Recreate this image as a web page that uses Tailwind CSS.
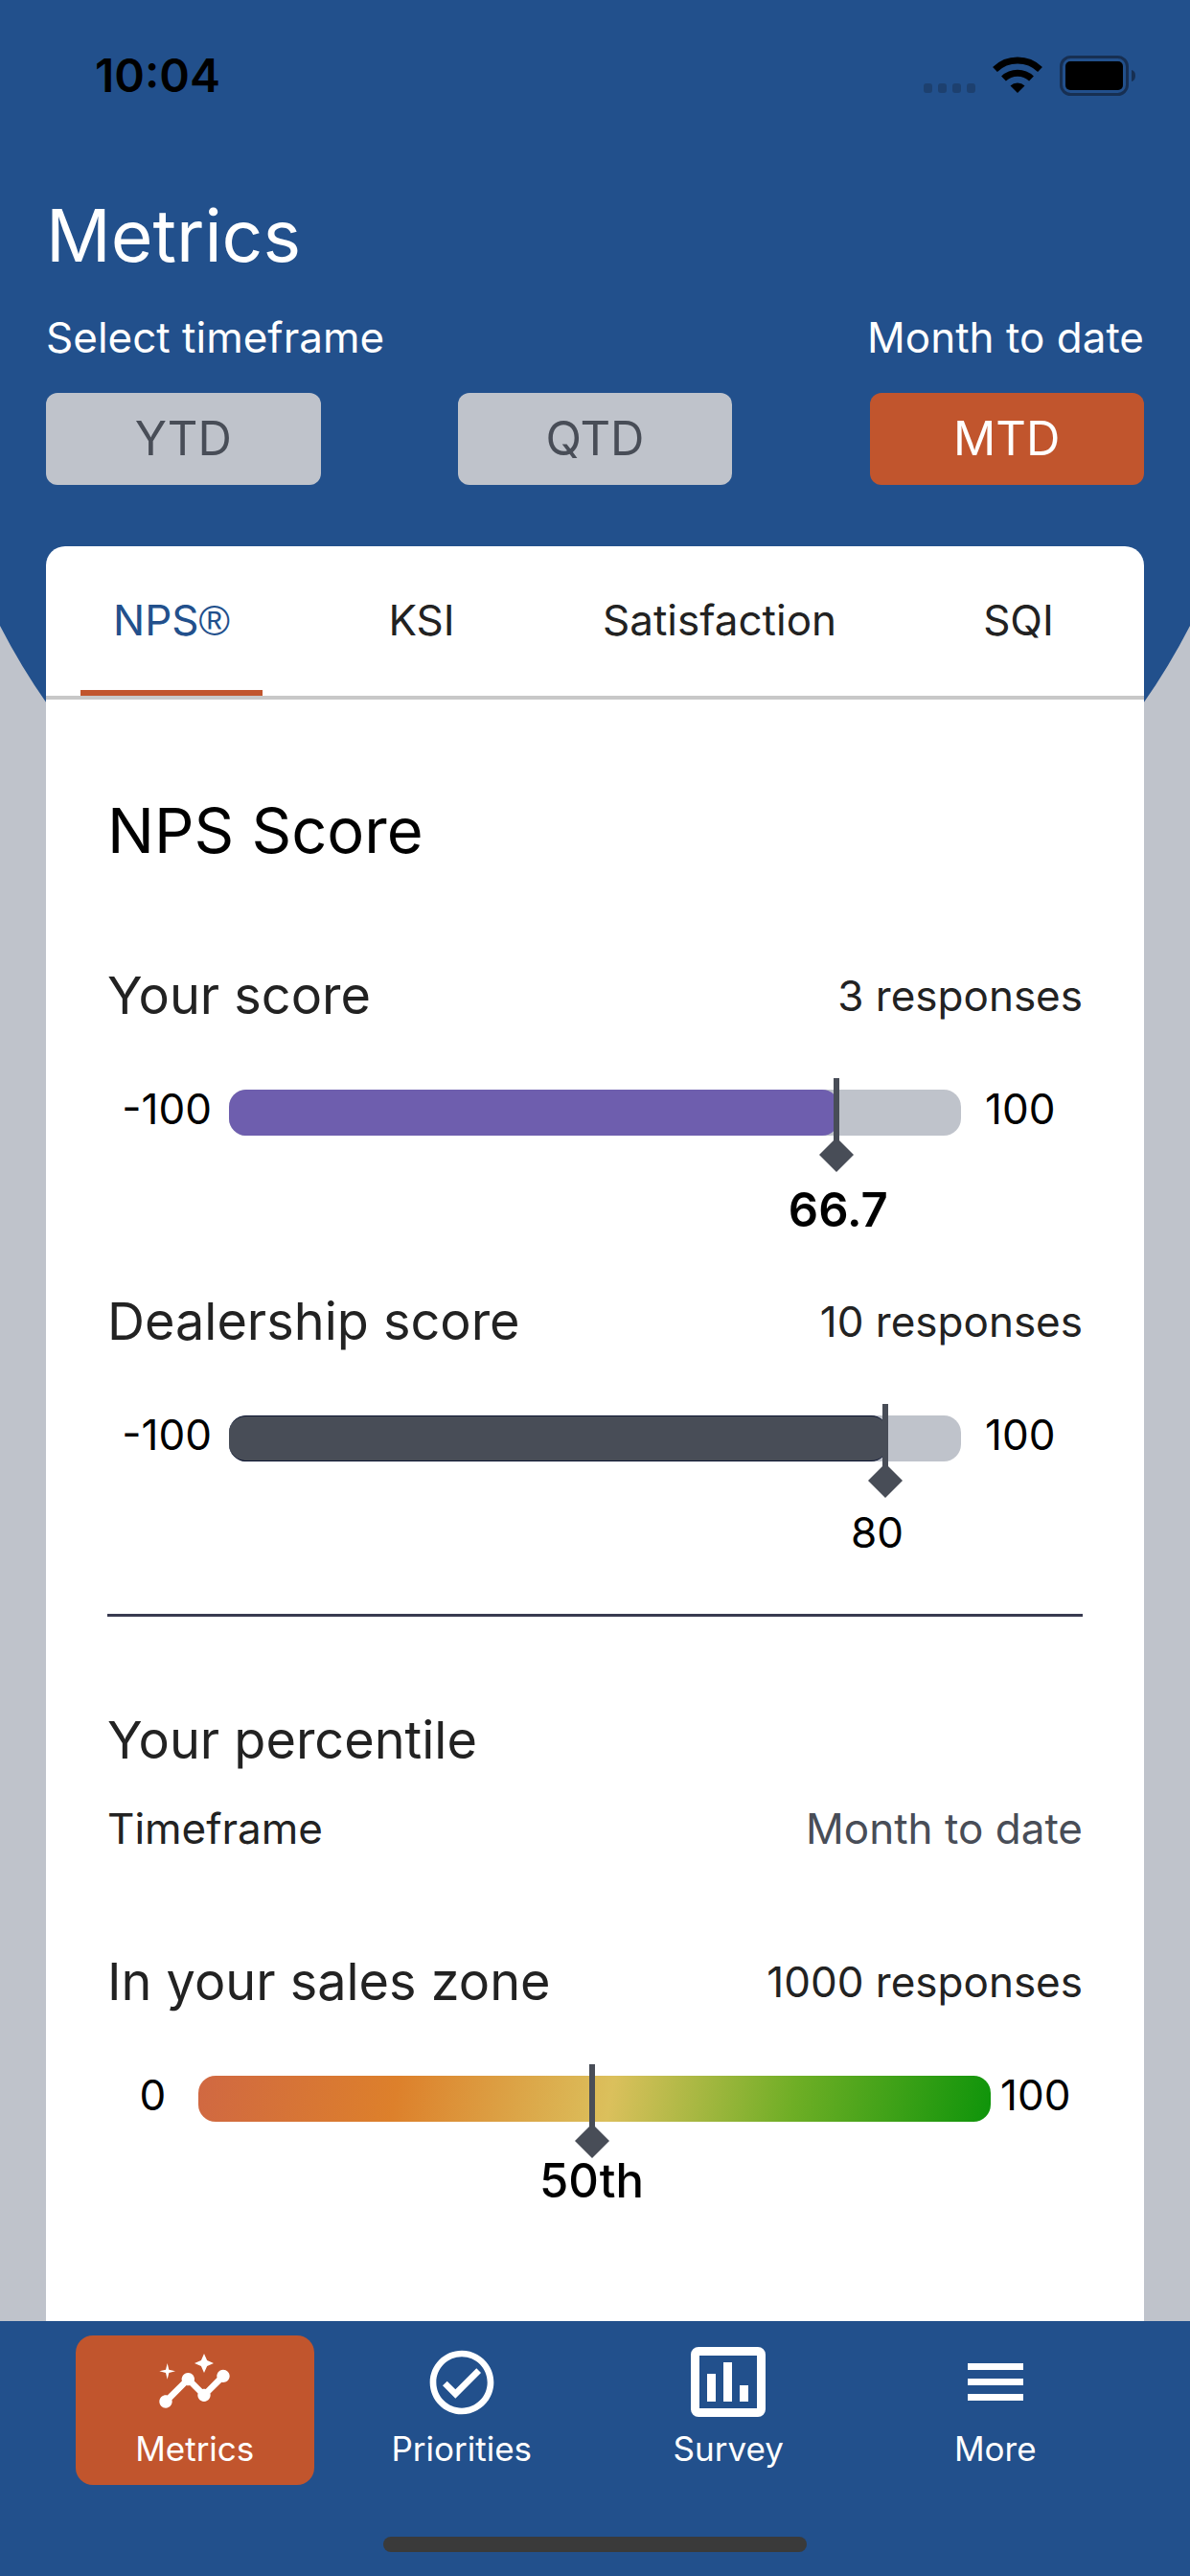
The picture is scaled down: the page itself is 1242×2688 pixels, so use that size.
<!DOCTYPE html>
<html lang="en">
  <head>
    <meta charset="utf-8" />
    <title>Metrics</title>
    <meta name="viewport" content="width=device-width, initial-scale=1" />
    <script src="https://cdn.jsdelivr.net/npm/@tailwindcss/browser@4"></script>
  </head>
  <body class="relative flex flex-col min-h-screen bg-[#bfc3cb] font-['Inter','Liberation_Sans',sans-serif] text-[#222]">
    <!-- curved backdrop behind the header -->
    <svg class="absolute top-0 left-0 w-full h-[1033px]" viewBox="0 0 1242 1033" preserveAspectRatio="none" fill="#22508c" aria-hidden="true">
      <path d="M0 0H1242V653A698 698 0 0 1 0 653z" />
    </svg>

    <div class="relative flex items-center justify-between h-[158px] pl-[99px] pr-14 text-black">
      <span class="text-[48px] font-semibold">10:04</span>
      <div class="flex items-center gap-[18px]">
        <svg class="w-[54px] h-[44px]" viewBox="0 0 54 44" fill="#1d406f" aria-hidden="true">
          <rect x="0" y="30" width="9" height="10" rx="3" />
          <rect x="15" y="30" width="9" height="10" rx="3" />
          <rect x="30" y="30" width="9" height="10" rx="3" />
          <rect x="45" y="30" width="9" height="10" rx="3" />
        </svg>
        <svg class="w-[52px] h-[44px]" viewBox="0 0 52 44" fill="none" stroke="#000" stroke-width="7" aria-hidden="true">
          <path d="M2.500 15.500a34 34 0 0 1 47 0" />
          <path d="M11.500 25a21 21 0 0 1 29 0" />
          <path d="M18.500 32.500a11 11 0 0 1 15 0L26 40z" fill="#000" stroke="none" />
        </svg>
        <svg class="w-[80px] h-[44px]" viewBox="0 0 80 44" aria-hidden="true">
          <rect x="1.500" y="2.500" width="69" height="39" rx="10" fill="none" stroke="#172f52" stroke-width="3" />
          <rect x="6" y="7" width="60" height="30" rx="5" />
          <path d="M75 16q4 1 4 6t-4 6z" fill="#172f52" />
        </svg>
      </div>
    </div>

    <header class="relative px-12 text-white">
      <h1 class="text-[75px] leading-[112px] pt-8">Metrics</h1>
      <div class="flex justify-between text-[44px] leading-[56px] mt-[22px]">
        <span>Select timeframe</span>
        <span>Month to date</span>
      </div>
      <div class="flex justify-between mt-[30px] text-[49px]">
        <button class="w-1/4 h-24 rounded-xl bg-[#bfc3cb] text-[#484d57]">YTD</button>
        <button class="w-1/4 h-24 rounded-xl bg-[#bfc3cb] text-[#484d57]">QTD</button>
        <button class="w-1/4 h-24 rounded-xl bg-[#c1552d]">MTD</button>
      </div>
    </header>

    <main class="relative flex-1 mx-12 mt-16 bg-white rounded-t-[20px]">
      <div class="grid grid-cols-[262fr_260fr_362fr_262fr] justify-items-center border-b-4 border-[#c8c8c8] text-[44px]" role="tablist">
        <button class="h-[156px] px-[34px] pt-1 border-b-[6px] border-[#c1552d] text-[#22508c]" role="tab" aria-selected="true">NPS<span class="font-['Liberation_Sans',sans-serif]">®</span></button>
        <button class="h-[156px] px-[34px] pt-1 border-b-[6px] border-transparent" role="tab">KSI</button>
        <button class="h-[156px] px-[34px] pt-1 border-b-[6px] border-transparent" role="tab">Satisfaction</button>
        <button class="h-[156px] px-[34px] pt-1 border-b-[6px] border-transparent" role="tab">SQI</button>
      </div>

      <div class="px-16">
        <h2 class="text-[65px] leading-[80px] mt-[97px] text-black">NPS Score</h2>

        <section class="mt-[100px] h-[340px]">
          <div class="flex justify-between items-center leading-[64px]">
            <h3 class="text-[54px]">Your score</h3>
            <span class="text-[44px]">3 responses</span>
          </div>
          <div class="flex items-start mt-[66px] text-black text-[44px] leading-[40px]">
            <span class="w-[127px] pr-[18px] text-right">-100</span>
            <div class="relative flex-1 h-12 rounded-[18px] bg-[#bfc3cb]">
              <div class="h-full rounded-[18px] bg-[#6e5eae]" style="width: 83.35%"></div>
              <div class="absolute -top-3 w-[6px] flex flex-col items-center -translate-x-full" style="left: 83.35%">
                <div class="w-[6px] h-[68px] bg-[#484d57]"></div>
                <svg class="w-9 h-9 -mt-[6px] shrink-0" viewBox="0 0 36 36" fill="#484d57"><path d="M18 0l18 18-18 18L0 18z" /></svg>
                <span class="mt-3 pl-1 text-[49px] leading-[56px] font-semibold">66.7</span>
              </div>
            </div>
            <span class="w-[127px] pl-[25px]">100</span>
          </div>
        </section>

        <section class="h-[340px] border-b-[3px] border-[#383a50]">
          <div class="flex justify-between items-center leading-[64px]">
            <h3 class="text-[54px]">Dealership score</h3>
            <span class="text-[44px]">10 responses</span>
          </div>
          <div class="flex items-start mt-[66px] text-black text-[44px] leading-[40px]">
            <span class="w-[127px] pr-[18px] text-right">-100</span>
            <div class="relative flex-1 h-12 rounded-[18px] bg-[#bfc3cb]">
              <div class="h-full rounded-[18px] bg-[#484d57] border-y border-[#0b1430]" style="width: 90%"></div>
              <div class="absolute -top-3 w-[6px] flex flex-col items-center -translate-x-full" style="left: 90%">
                <div class="w-[6px] h-[68px] bg-[#484d57]"></div>
                <svg class="w-9 h-9 -mt-[6px] shrink-0" viewBox="0 0 36 36" fill="#484d57"><path d="M18 0l18 18-18 18L0 18z" /></svg>
                <span class="mt-2 pr-4 leading-[56px]">80</span>
              </div>
            </div>
            <span class="w-[127px] pl-[25px]">100</span>
          </div>
        </section>

        <h3 class="text-[54px] leading-[64px] mt-[97px]">Your percentile</h3>
        <div class="flex justify-between text-[44px] leading-[56px] mt-8">
          <span>Timeframe</span>
          <span class="text-[#484d57]">Month to date</span>
        </div>

        <section class="mt-[100px]">
          <div class="flex justify-between items-center leading-[64px]">
            <h3 class="text-[54px]">In your sales zone</h3>
            <span class="text-[44px]">1000 responses</span>
          </div>
          <div class="flex items-start mt-[66px] text-black text-[44px] leading-[40px]">
            <span class="w-[95px] text-center">0</span>
            <div class="relative flex-1 h-12 rounded-[18px] bg-[linear-gradient(100deg,#d06842,#dd802b_25%,#dbc05c_52%,#6eae25_75%,#0e940a)]">
              <div class="absolute -top-3 w-[6px] flex flex-col items-center -translate-x-full" style="left: 50%">
                <div class="w-[6px] h-[68px] bg-[#484d57]"></div>
                <svg class="w-9 h-9 -mt-[6px] shrink-0" viewBox="0 0 36 36" fill="#484d57"><path d="M18 0l18 18-18 18L0 18z" /></svg>
                <span class="-mt-1 text-[49px] leading-[56px] font-medium">50th</span>
              </div>
            </div>
            <span class="w-24 pl-[10px]">100</span>
          </div>
        </section>
      </div>
    </main>

    <nav class="relative h-[266px] bg-[#22508c] text-white text-[35px] leading-[58px]">
      <div class="grid grid-cols-4 px-16 pt-[15px]">
        <a href="#" class="mx-[15px] h-[156px] pt-[9px] rounded-[18px] bg-[#c1552d] flex flex-col items-center">
          <svg class="w-20 h-20" viewBox="0 0 24 24" fill="currentColor" aria-hidden="true">
            <path d="M21 8c-1.450 0-2.260 1.440-1.930 2.510l-3.550 3.560c-.3-.09-.74-.09-1.040 0l-2.550-2.550C12.270 10.450 11.460 9 10 9c-1.450 0-2.270 1.440-1.930 2.520l-4.560 4.550C2.440 15.740 1 16.550 1 18c0 1.100.9 2 2 2 1.450 0 2.260-1.440 1.930-2.510l4.550-4.560c.3.090.74.090 1.040 0l2.550 2.550C12.730 16.550 13.540 18 15 18c1.450 0 2.270-1.440 1.930-2.520l3.560-3.550C21.560 12.260 23 11.450 23 10c0-1.100-.9-2-2-2z" />
            <path d="M15 9l.94-2.070L18 6l-2.060-.93L15 3l-.92 2.070L12 6l2.080.93zM3.500 11L4 9l2-.5L4 8l-.5-2L3 8l-2 .5L3 9z" />
          </svg>
          <span>Metrics</span>
        </a>
        <a href="#" class="pt-[9px] flex flex-col items-center">
          <svg class="w-20 h-20" viewBox="0 0 24 24" fill="currentColor" aria-hidden="true">
            <path d="M12 2C6.480 2 2 6.480 2 12s4.480 10 10 10 10-4.480 10-10S17.520 2 12 2zm0 18c-4.420 0-8-3.580-8-8s3.580-8 8-8 8 3.580 8 8-3.580 8-8 8zm4.590-12.420L10 14.170l-2.590-2.580L6 13l4 4 8-8z" />
          </svg>
          <span>Priorities</span>
        </a>
        <a href="#" class="pt-[9px] flex flex-col items-center">
          <svg class="w-20 h-20" viewBox="0 0 80 80" fill="currentColor" aria-hidden="true">
            <path fill-rule="evenodd" d="M9 3h62a8 8 0 0 1 8 8v57a8 8 0 0 1-8 8H9a8 8 0 0 1-8-8V11a8 8 0 0 1 8-8zm1 9v55h60V12z" />
            <path d="M18 31h9v29h-9zM35 19h9v41h-9zM52 43h9v17h-9z" />
          </svg>
          <span>Survey</span>
        </a>
        <a href="#" class="pt-[9px] flex flex-col items-center">
          <svg class="w-20 h-20" viewBox="0 0 80 80" fill="currentColor" aria-hidden="true">
            <path d="M11 20h58v7H11zM11 36h58v7H11zM11 52h58v7H11z" />
          </svg>
          <span>More</span>
        </a>
      </div>
      <div class="mx-auto mt-[54px] w-[442px] h-4 rounded-full bg-[#3a3a3a]"></div>
    </nav>
  </body>
</html>
